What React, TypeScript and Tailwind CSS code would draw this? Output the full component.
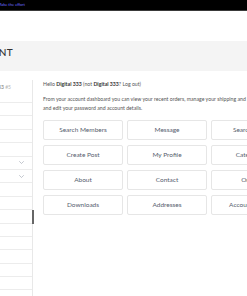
const buttons = [
  'Search Members',
  'Message',
  'Search Posts',
  'Create Post',
  'My Profile',
  'Categories',
  'About',
  'Contact',
  'Orders',
  'Downloads',
  'Addresses',
  'Account details',
]

function Chevron() {
  return (
    <svg width="5" height="3" viewBox="0 0 10 6" fill="none" stroke="#9ca3af" strokeWidth="1.2" strokeLinecap="round" strokeLinejoin="round">
      <path d="M1 1l4 4 4-4" />
    </svg>
  )
}

export default function App() {
  const rows = Array.from({ length: 15 }, (_, i) => i)

  return (
    <div className="w-[247px] h-[296px] overflow-hidden bg-white font-['Lato','Liberation_Sans',sans-serif]">
      <div className="h-[11px] bg-black border-b border-[#3a3a3a] flex items-center">
        <div className="w-[25px] flex justify-end whitespace-nowrap">
          <span className="text-[4px] leading-none text-[#6f6cff]">Make the effort</span>
        </div>
      </div>

      <div className="h-[30px]" />

      <div className="h-[30px] bg-[#f4f4f4] flex items-start pt-[6px]">
        <div className="w-[13px] flex justify-end whitespace-nowrap">
          <h1 className="text-[10px] leading-none font-medium tracking-[0.3px] text-[#333]">MY ACCOUNT</h1>
        </div>
      </div>

      <div className="flex pt-[9px] h-[225px]">
        <aside className="w-[33px] shrink-0 border-r border-[#e8e8e8] relative">
          <div className="h-[22px] flex items-start pt-[5px]">
            <div className="w-[11px] flex justify-end whitespace-nowrap">
              <span className="text-[5px] leading-none text-[#777]">
                Digital 333 <span className="text-[#b5b5b5]">#5</span>
              </span>
            </div>
          </div>
          {rows.map((i) => (
            <div key={i} className="h-[13.4px] border-t border-[#ececec] flex items-center justify-end pr-[8px] relative">
              {(i === 4 || i === 5) && <Chevron />}
              {i === 8 && <div className="absolute -right-[2px] top-0 w-[2px] h-[13.4px] bg-[#666]" />}
            </div>
          ))}
        </aside>

        <main className="ml-[10px] w-[248px] shrink-0 text-[#555]">
          <p className="text-[5.2px] leading-[9px] whitespace-nowrap">
            Hello <strong className="font-bold text-[#333]">Digital 333</strong> (not{' '}
            <strong className="font-bold text-[#333]">Digital 333</strong>? Log out)
          </p>
          <p className="mt-[6px] text-[5.2px] leading-[9px]">
            From your account dashboard you can view your recent orders, manage your shipping and billing addresses,
            and edit your password and account details.
          </p>

          <div className="mt-[7px] grid grid-cols-[80px_80px_80px] gap-x-[4px] gap-y-[5px]">
            {buttons.map((b) => (
              <div
                key={b}
                className="h-[20px] border border-[#e6e6e6] rounded-[2px] flex items-center justify-center text-[6.5px] whitespace-nowrap text-[#56606e]"
              >
                {b}
              </div>
            ))}
          </div>
        </main>
      </div>
    </div>
  )
}
